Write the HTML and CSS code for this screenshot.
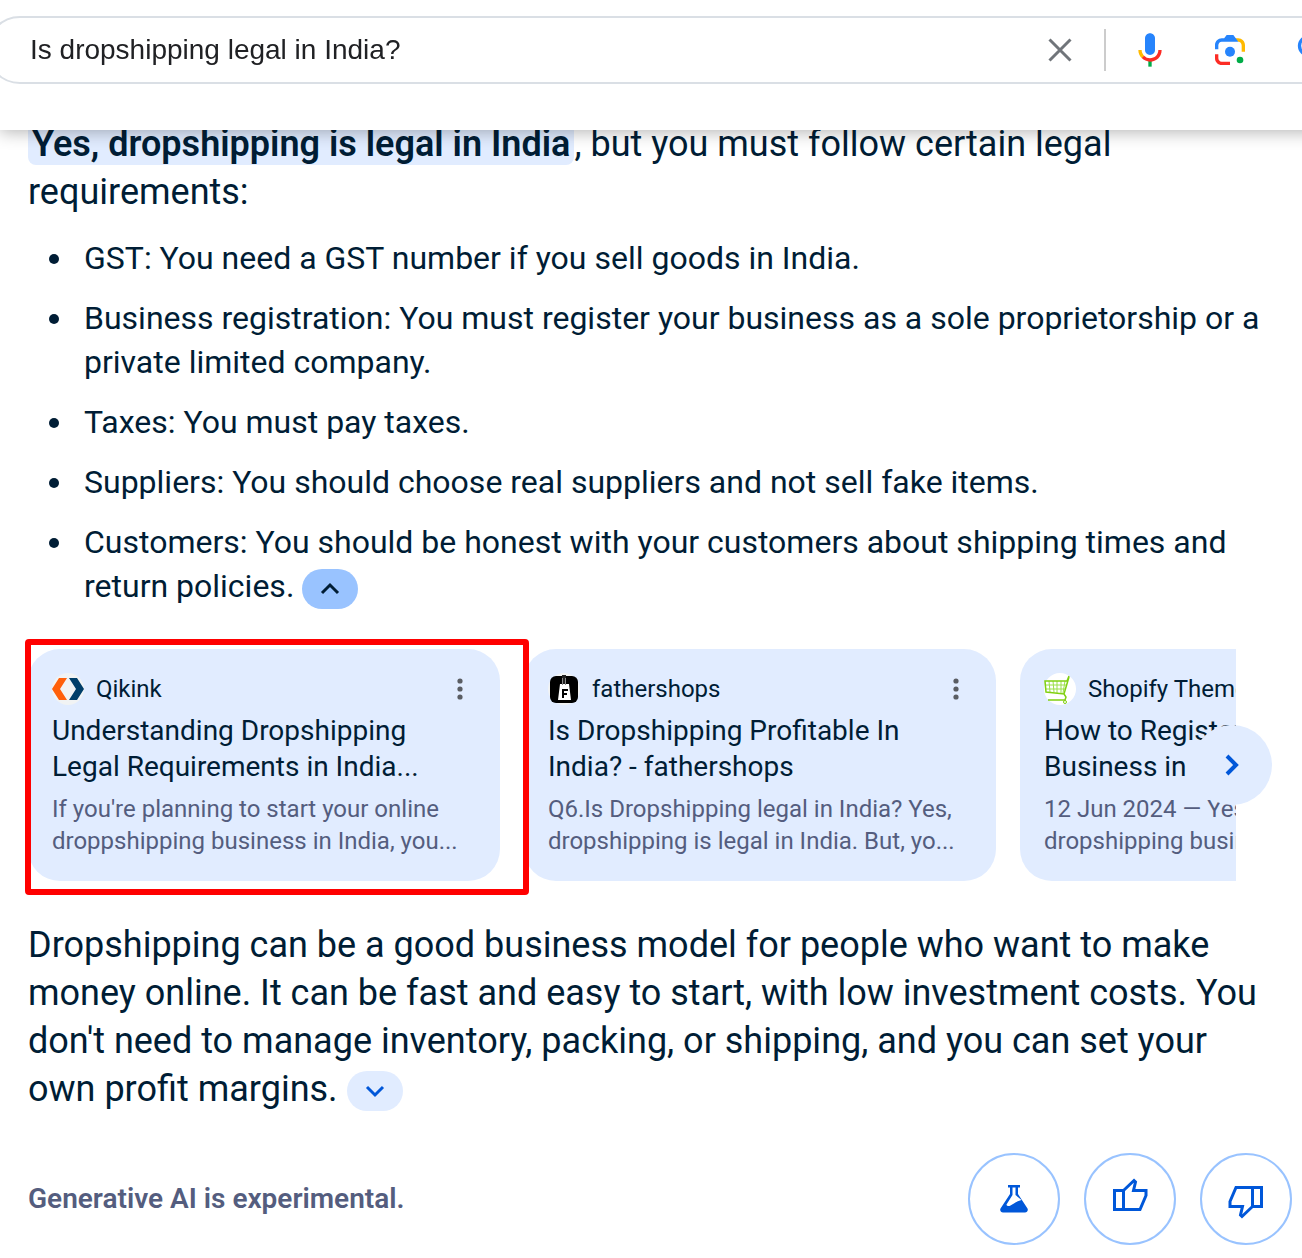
FILE: index.html
```
<!DOCTYPE html>
<html lang="en">
<head>
  <meta charset="UTF-8" />
  <meta name="viewport" content="width=device-width, initial-scale=1.0" />
  <title>Is dropshipping legal in India? - Search</title>
  <link rel="stylesheet" href="styles.css">
</head>
<body>
  <header class="topbar">
    <form class="search" role="search">
      <input type="text" class="search-input" aria-label="Search" value="Is dropshipping legal in India?" />
      <button type="reset" class="search-btn clear" aria-label="Clear">
        <svg width="24" height="24" viewBox="0 0 24 24"><path d="M1.500 1.500l21 21M22.500 1.500l-21 21" stroke="#70757a" stroke-width="3" fill="none" /></svg>
      </button>
      <span class="divider"></span>
      <button type="button" class="search-btn" aria-label="Search by voice">
        <svg width="40" height="40" viewBox="0 0 24 24">
          <path fill="#2684fc" d="M12 15c1.660 0 3-1.310 3-2.970v-7.020C15 3.340 13.660 2 12 2s-3 1.340-3 3.010v7.020C9 13.690 10.340 15 12 15z" />
          <path fill="#00ac47" d="M11 18.080h2v3.920h-2z" />
          <path fill="#ffba00" d="M7.050 16.870c-1.270-1.330-2.050-2.830-2.050-4.870h2c0 1.450.56 2.420 1.470 3.380v.32l-1.150 1.180z" />
          <path fill="#fc2c25" d="M12 16.930a4.970 5.250 0 0 1-3.540-1.550l-1.410 1.490c1.260 1.340 3.020 2.130 4.950 2.130 3.870 0 6.990-2.920 6.990-7h-1.990c0 2.920-2.240 4.930-5 4.930z" />
        </svg>
      </button>
      <button type="button" class="search-btn" aria-label="Search by image">
        <svg width="40" height="40" viewBox="0 0 192 192">
          <circle fill="#00ac47" cx="144.070" cy="144" r="16" />
          <circle fill="#2684fc" cx="96.070" cy="104" r="24" />
          <path fill="#fc2c25" d="M24 135.200c0 18.110 14.690 32.800 32.800 32.800H96v-16l-40.100-.1c-8.800 0-15.900-8.190-15.900-17.900v-18H24v19.200z" />
          <path fill="#ffba00" d="M168 72.800c0-18.110-14.690-32.800-32.800-32.800H116l20 16c8.800 0 16 8.290 16 18v30h16V72.800z" />
          <path fill="#2684fc" d="M112 24H80L68 40H56.800C38.690 40 24 54.690 24 72.800V92h16V74c0-9.710 7.200-18 16-18h80l-24-32z" />
        </svg>
      </button>
      <button type="submit" class="search-btn" aria-label="Search">
        <svg width="40" height="40" viewBox="0 0 24 24"><circle cx="10" cy="9.500" r="5.500" stroke="#2684fc" stroke-width="2" fill="none" /><path d="M14 14l6 6" stroke="#2684fc" stroke-width="2" /></svg>
      </button>
    </form>
  </header>

  <main class="overview">
    <p class="lead"><strong>Yes, dropshipping is legal in India</strong>, but you must follow certain legal requirements:</p>
    <ul class="rules">
      <li>GST: You need a GST number if you sell goods in India.</li>
      <li>Business registration: You must register your business as a sole proprietorship or a private limited company.</li>
      <li>Taxes: You must pay taxes.</li>
      <li>Suppliers: You should choose real suppliers and not sell fake items.</li>
      <li>Customers: You should be honest with your customers about shipping times and return policies.
        <button type="button" class="toggle open" aria-label="Hide sources">
          <svg width="20" height="12" viewBox="0 0 20 12"><path d="M2 10l8-8 8 8" /></svg>
        </button>
      </li>
    </ul>

    <section class="carousel">
      <div class="cards">
        <article class="card">
          <div class="card-head">
            <svg class="favicon" width="32" height="32" viewBox="0 0 32 32">
              <circle cx="16" cy="16" r="16" fill="#f1f3f4" />
              <path fill="#ff5f0a" d="M7 5h8L8 16l7 11H7L0 16z" />
              <path fill="#003e69" d="M17 5h8l7 11-7 11h-8l7-11z" />
            </svg>
            <span class="site">Qikink</span>
            <button type="button" class="more" aria-label="More options"><svg width="6" height="22" viewBox="0 0 6 22"><circle cx="3" cy="3" r="2.600" /><circle cx="3" cy="11" r="2.600" /><circle cx="3" cy="19" r="2.600" /></svg></button>
          </div>
          <h3><a href="#">Understanding Dropshipping Legal Requirements in India...</a></h3>
          <p>If you're planning to start your online droppshipping business in India, you...</p>
        </article>
        <article class="card">
          <div class="card-head">
            <svg class="favicon" width="32" height="32" viewBox="0 0 32 32">
              <circle cx="16" cy="16" r="16" fill="#f1f3f4" />
              <rect x="2" y="3" width="28" height="27" rx="6" fill="#000" />
              <path fill="#fff" d="M12 11h9l2 16H10z" />
              <path fill="#222" d="M14 2h4v9h-4z" />
              <path fill="#888" d="M14 5h1v7h-1zM17 5h1v7h-1z" />
              <path fill="#000" d="M14 16h6v2h-4v2h3v2h-3v3h-2z" />
            </svg>
            <span class="site">fathershops</span>
            <button type="button" class="more" aria-label="More options"><svg width="6" height="22" viewBox="0 0 6 22"><circle cx="3" cy="3" r="2.600" /><circle cx="3" cy="11" r="2.600" /><circle cx="3" cy="19" r="2.600" /></svg></button>
          </div>
          <h3><a href="#">Is Dropshipping Profitable In India? - fathershops</a></h3>
          <p>Q6.Is Dropshipping legal in India? Yes, dropshipping is legal in India. But, yo...</p>
        </article>
        <article class="card">
          <div class="card-head">
            <svg class="favicon" width="32" height="32" viewBox="0 0 32 32">
              <circle cx="16" cy="16" r="16" fill="#fff" />
              <path fill="none" stroke="#9be04a" d="M1 12h21M1 16h20M5 8l1 11M9 8l1 11M13 8v12M17 8v12M21 8l-2 12" />
              <path fill="none" stroke="#80d010" stroke-width="1.500" d="M25 3l-2 5H1l1 11 18 2 5-17M20 21l2 3-1 3H4" />
              <circle cx="21" cy="29" r="1.500" fill="none" stroke="#80d010" />
            </svg>
            <span class="site">Shopify Themes</span>
          </div>
          <h3><a href="#">How to Register Dropshipping Business in India</a></h3>
          <p>12 Jun 2024 — Yes, you can start a dropshipping business</p>
        </article>
      </div>
      <div class="marker"></div>
      <button type="button" class="next" aria-label="Next">
        <svg width="14" height="20" viewBox="0 0 14 20"><path d="M2 1l9 9-9 9" /></svg>
      </button>
    </section>

    <p class="lead">Dropshipping can be a good business model for people who want to make money online. It can be fast and easy to start, with low investment costs. You don't need to manage inventory, packing, or shipping, and you can set your own profit margins.
      <button type="button" class="toggle" aria-label="Show sources">
        <svg width="20" height="12" viewBox="0 0 20 12"><path d="M2 2l8 8 8-8" /></svg>
      </button>
    </p>

    <footer class="feedback">
      <span class="note">Generative AI is experimental.</span>
      <button type="button" class="round" aria-label="Labs">
        <svg width="28" height="28" viewBox="0 0 28 28"><path fill="#0057d9" fill-rule="evenodd" d="M8 0h12v2.500h-2V9l9.500 14.500c1 2-.5 4-2.500 4H3c-2 0-3.500-2-2.500-4L10 9V2.500H8zM12.500 2.500V10l-6 9.500c0 1.500 2 2 4 1 3-1.800 6-4.300 11-5.500L15.500 10V2.500z" /></svg>
      </button>
      <button type="button" class="round" aria-label="Good response">
        <svg width="36" height="36" viewBox="-1 4 36 36"><path class="thumb" d="M1.500 13.500h9v19h-9zM10.500 13.500l10.500-10 1.500 1.500-2 8.500H33v5l-6 14H10.500" /></svg>
      </button>
      <button type="button" class="round" aria-label="Bad response">
        <svg class="down" width="36" height="36" viewBox="-1 3 36 36"><path class="thumb" d="M1.500 13.500h9v19h-9zM10.500 13.500l10.500-10 1.500 1.500-2 8.500H33v5l-6 14H10.500" /></svg>
      </button>
    </footer>
  </main>
</body>
</html>
```

FILE: styles.css
```
:root {
  --ink: #001d35;
  --muted: #545d7e;
  --blue: #0057d9;
  --tint: #e1ecff;
  --tint-strong: #99c3ff;
  --sans: Roboto, "Liberation Sans", sans-serif;
}
* { box-sizing: border-box; }
body {
  margin: 0;
  background: #fff;
  color: var(--ink);
  font-family: var(--sans);
  overflow-x: hidden;
}
h3, p, ul { margin: 0; }
button {
  padding: 0;
  border: 0;
  background: none;
  cursor: pointer;
}
svg {
  display: block;
  overflow: visible;
}

.topbar {
  position: fixed;
  top: 0;
  left: 0;
  right: -20px;
  z-index: 2;
  height: 130px;
  padding-top: 16px;
  background: #fff;
  box-shadow: 0 2px 16px rgba(0, 0, 0, 0.3);
}
.search {
  display: flex;
  align-items: center;
  height: 68px;
  margin: 0 -34px 0 -14px;
  border: 2px solid #dadfe5;
  border-radius: 34px;
}
.search-input {
  flex: 1;
  min-width: 0;
  padding: 0 0 0 42px;
  border: 0;
  outline: 0;
  background: none;
  color: #202124;
  font: 28px "Liberation Sans", Arial, sans-serif;
}
.search-btn {
  display: flex;
  justify-content: center;
  width: 80px;
}
.search-btn.clear { width: 88px; }
.search-btn:last-child { width: 84px; }
.divider {
  width: 2px;
  height: 42px;
  margin-right: 4px;
  background: #ccc;
}

.overview { padding: 120px 10px 0 28px; }
.lead {
  padding-right: 28px;
  font-size: 36px;
  line-height: 48px;
}
.lead strong {
  padding: 0 4px;
  border-radius: 8px;
  background: var(--tint);
  font-weight: 600;
}
.rules {
  margin: 20px 0 40px;
  padding: 0 0 0 48px;
  font-size: 32px;
  line-height: 44px;
}
.rules li { padding-left: 8px; }
.rules li + li { margin-top: 16px; }
.toggle {
  display: inline-flex;
  align-items: center;
  justify-content: center;
  width: 56px;
  height: 40px;
  border-radius: 20px;
  background: var(--tint);
  color: var(--blue);
  vertical-align: middle;
}
.toggle.open {
  background: var(--tint-strong);
  color: var(--ink);
}
.toggle path, .next path {
  fill: none;
  stroke: currentColor;
  stroke-width: 3;
}

.carousel {
  position: relative;
  margin: 0 56px 40px 0;
}
.cards {
  display: flex;
  gap: 24px;
  overflow: hidden;
}
.card {
  flex: 0 0 472px;
  padding: 24px;
  border-radius: 32px;
  background: var(--tint);
}
.card-head {
  display: flex;
  align-items: center;
  gap: 12px;
  height: 32px;
}
.favicon { border-radius: 50%; }
.site {
  flex: 1;
  font-size: 24px;
  white-space: nowrap;
}
.more {
  padding: 0 13px;
  fill: #5a5d63;
}
.card h3 {
  margin: 8px 0;
  font-size: 28px;
  font-weight: 400;
  line-height: 36px;
}
.card a {
  color: inherit;
  text-decoration: none;
}
.card p {
  color: var(--muted);
  font-size: 24px;
  line-height: 32px;
}
.marker {
  position: absolute;
  top: -10px;
  left: -3px;
  width: 504px;
  height: 256px;
  border: 6px solid #f00;
  border-radius: 4px;
}
.next {
  position: absolute;
  top: 76px;
  right: -36px;
  display: flex;
  align-items: center;
  justify-content: center;
  width: 80px;
  height: 80px;
  border-radius: 50%;
  background: var(--tint);
  color: var(--blue);
}
.next path { stroke-width: 4; }

.feedback {
  display: flex;
  align-items: center;
  gap: 24px;
  margin-top: 40px;
  padding-bottom: 12px;
}
.note {
  flex: 1;
  color: var(--muted);
  font-size: 28px;
  font-weight: 600;
}
.round {
  display: flex;
  align-items: center;
  justify-content: center;
  width: 92px;
  height: 92px;
  border: 2px solid var(--tint-strong);
  border-radius: 50%;
}
.thumb {
  fill: none;
  stroke: var(--blue);
  stroke-width: 3;
}
.down { transform: rotate(180deg); }
```
